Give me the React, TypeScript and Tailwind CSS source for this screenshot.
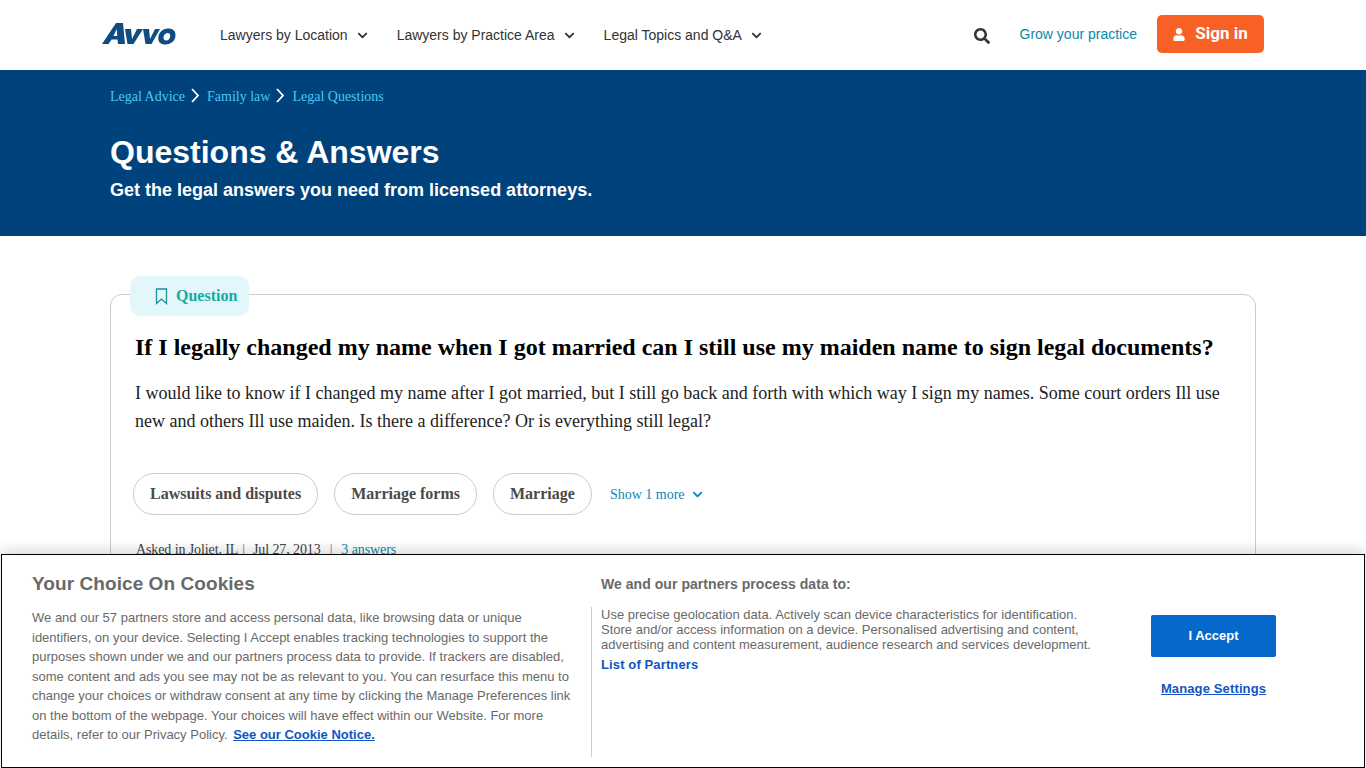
import { ChevronDown } from "lucide-react";
import { FaSearch, FaChevronDown, FaUser } from "react-icons/fa";

const navLinks = [
  { label: "Lawyers by Location", gap: "mr-[29px]" },
  { label: "Lawyers by Practice Area", gap: "mr-[29px]" },
  { label: "Legal Topics and Q&A", gap: "" },
];

function AvvoLogo() {
  return (
    <svg width="74" height="22" viewBox="0 0 74 22" fill="#0f4c81" className="mb-[3px]">
      <path d="M0 21 L14 0 L21 0 L23 21 L16 21 L15.5 16.5 L9.5 16.5 L6.5 21 Z M11.5 13 L15.3 13 L14.7 6 Z" fillRule="evenodd" />
      <path d="M23 6 L29 6 L30 16 L35 6 L41 6 L31.5 21 L25.5 21 Z" />
      <path d="M41 6 L47 6 L48 16 L53 6 L58 6 L49.5 21 L43.5 21 Z" />
      <path d="M66 5.5 C71 5.5 73.8 8 73.5 12.5 C73.2 18 69 21.5 63.5 21.5 C58.5 21.5 56 19 56.3 14.5 C56.7 9.5 60.5 5.5 66 5.5 Z M65.5 10 C63 10 61.5 12.2 61.5 14.8 C61.5 16.6 62.6 17.5 64.2 17.5 C66.8 17.5 68.2 15.2 68.2 12.7 C68.2 11 67.2 10 65.5 10 Z" fillRule="evenodd" />
    </svg>
  );
}

function Header() {
  return (
    <header className="h-[70px] bg-white flex items-center pl-[102px] pr-[102px] font-['Liberation_Sans',sans-serif]">
      <AvvoLogo />
      <nav className="flex items-center ml-[44px] text-[14px] text-[#333]">
        {navLinks.map((link) => (
          <a key={link.label} className={`flex items-center ${link.gap}`}>
            {link.label}
            <FaChevronDown className="ml-[9px] w-[11px] h-[11px] text-[#333]" />
          </a>
        ))}
      </nav>
      <FaSearch className="ml-auto w-[16px] h-[16px] text-[#333] mt-[2px]" />
      <a className="ml-[30px] mb-[1px] text-[14px] text-[#0d87a8]">Grow your practice</a>
      <button className="ml-[20px] mb-[2px] w-[107px] h-[38px] rounded-[5px] bg-[#f96124] text-white flex items-center justify-center gap-[10px] font-['Roboto',sans-serif] font-bold text-[17px]">
        <FaUser className="w-[12px] h-[13px]" />
        Sign in
      </button>
    </header>
  );
}

function Crumb() {
  return (
    <svg width="8" height="15" viewBox="0 0 8 15" fill="none" stroke="white" strokeWidth="1.8" className="ml-[6px] mr-[8px] mb-[2px]">
      <path d="M1 1 L7 7.5 L1 14" />
    </svg>
  );
}

function Hero() {
  return (
    <section className="h-[166px] bg-[#00437c] pl-[110px]">
      <div className="flex items-center pt-[11px] h-[42px] text-[14px] text-[#47c8f5] font-['Liberation_Serif',serif]">
        <a>Legal Advice</a>
        <Crumb />
        <a>Family law</a>
        <Crumb />
        <a>Legal Questions</a>
      </div>
      <h1 className="mt-[20px] text-[32px] leading-[40px] font-bold text-white font-['Liberation_Sans',sans-serif]">
        Questions &amp; Answers
      </h1>
      <p className="mt-[7px] text-[18px] leading-[22px] font-bold text-white font-['Liberation_Sans',sans-serif]">
        Get the legal answers you need from licensed attorneys.
      </p>
    </section>
  );
}

function Tag({ label }: { label: string }) {
  return (
    <a className="h-[42px] flex items-center rounded-[21px] border border-[#ccc] px-[16px] text-[16px] font-bold text-[#4a4a4a]">
      {label}
    </a>
  );
}

function QuestionCard() {
  return (
    <section className="pt-[58px] mx-[110px] font-['Liberation_Serif',serif]">
      <div className="relative h-[400px] rounded-[12px] border border-[#ccc] px-[24px] pt-[35px]">
        <div className="absolute -top-[19px] left-[19px] w-[119px] h-[40px] rounded-[10px] bg-[#e3f7fa] flex items-center pl-[25px] text-[16px] font-bold text-[#14ab9f]">
          <svg width="13" height="17" viewBox="0 0 13 17" fill="none" stroke="#1c8f9e" strokeWidth="1.3" className="mr-[8px] mt-[1px]">
            <path d="M1.5 1 H11.5 V15.5 L6.5 11 L1.5 15.5 Z" />
          </svg>
          Question
        </div>
        <h2 className="text-[24px] leading-[34px] font-bold text-black whitespace-nowrap">
          If I legally changed my name when I got married can I still use my maiden name to sign legal documents?
        </h2>
        <p className="mt-[15px] text-[18px] leading-[28px] text-[#222]">
          I would like to know if I changed my name after I got married, but I still go back and forth with which way I sign my names. Some court orders Ill use new and others Ill use maiden. Is there a difference? Or is everything still legal?
        </p>
        <div className="mt-[38px] -ml-[2px] flex items-center gap-[16px]">
          <Tag label="Lawsuits and disputes" />
          <Tag label="Marriage forms" />
          <Tag label="Marriage" />
          <a className="ml-[2px] flex items-center text-[14px] text-[#0d87b8]">
            Show 1 more
            <ChevronDown className="ml-[5px] w-[15px] h-[15px] text-[#0d87b8]" strokeWidth={3} />
          </a>
        </div>
        <div className="mt-[26px] ml-[1px] text-[14px] leading-[18px] tracking-[-0.1px] text-[#444] flex items-center">
          Asked in Joliet, IL
          <span className="mx-[4px] text-[#777]">|</span>
          <span className="ml-[4px]">Jul 27, 2013</span>
          <span className="ml-[9px] mr-[9px] text-[#777]">|</span>
          <a className="text-[#0d87a8]">3 answers</a>
        </div>
      </div>
    </section>
  );
}

function CookieBanner() {
  return (
    <div className="absolute left-[1px] right-[1px] bottom-0 h-[214px] bg-white border border-black shadow-[0_-4px_12px_rgba(0,0,0,0.15)] flex font-['Liberation_Sans',sans-serif] text-[#696969]">
      <div className="w-[589px] shrink-0 pl-[30px] pt-[17px] pr-[14px]">
        <h2 className="text-[19px] leading-[24px] font-bold tracking-[0.07px]">Your Choice On Cookies</h2>
        <p className="mt-[12px] text-[13px] leading-[19.5px]">
          We and our <span className="font-medium">57</span> partners store and access personal data, like browsing data or unique identifiers, on your device. Selecting I Accept enables tracking technologies to support the purposes shown under we and our partners process data to provide. If trackers are disabled, some content and ads you see may not be as relevant to you. You can resurface this menu to change your choices or withdraw consent at any time by clicking the Manage Preferences link on the bottom of the webpage. Your choices will have effect within our Website. For more details, refer to our Privacy Policy.{" "}
          <a className="ml-[2px] font-bold underline text-[#0f56c4]">See our Cookie Notice.</a>
        </p>
      </div>
      <div className="w-[540px] shrink-0 pt-[21px]">
        <h3 className="ml-[10px] text-[14px] leading-[16px] font-bold tracking-[0.05px]">We and our partners process data to:</h3>
        <div className="mt-[16px] h-[150px] border-l border-[#ccc] pl-[9px] pr-[35px] text-[13px] leading-[15px]">
          <p className="-mt-[1px]">
            Use precise geolocation data. Actively scan device characteristics for identification. Store and/or access information on a device. Personalised advertising and content, advertising and content measurement, audience research and services development.
          </p>
          <a className="block mt-[5px] font-bold tracking-[0.12px] text-[#0f56c4]">List of Partners</a>
        </div>
      </div>
      <div className="flex-1 flex flex-col items-center pt-[60px] pl-[7px] pr-[75px]">
        <button className="w-[125px] h-[42px] shrink-0 rounded-[2px] bg-[#0668ca] text-white text-[13px] font-bold">I Accept</button>
        <a className="mt-[22px] text-[13px] tracking-[0.13px] font-bold underline text-[#0f56c4]">Manage Settings</a>
      </div>
    </div>
  );
}

export default function App() {
  return (
    <div className="relative h-[768px] overflow-hidden bg-white">
      <Header />
      <Hero />
      <QuestionCard />
      <CookieBanner />
    </div>
  );
}
